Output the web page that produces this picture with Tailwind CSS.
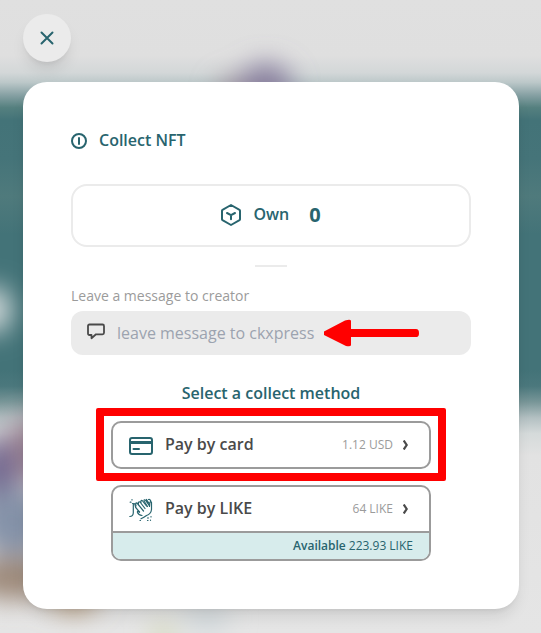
<!DOCTYPE html>
<html lang="en">
<head>
<meta charset="utf-8">
<title>Collect NFT</title>
<script src="https://cdn.jsdelivr.net/npm/@tailwindcss/browser@4"></script>
</head>
<body class="relative h-[633px] w-[541px] overflow-hidden bg-[#e0e0e0] font-['Open_Sans','Noto_Sans',sans-serif] text-[#28646e]">
  <!-- blurred page behind the dialog -->
  <svg class="absolute inset-0" width="541" height="633" viewBox="0 0 541 633" aria-hidden="true">
    <defs>
      <linearGradient id="bg" x1="0" y1="0" x2="0" y2="633" gradientUnits="userSpaceOnUse">
        <stop offset="0" stop-color="#e0e0e0"/><stop offset=".088" stop-color="#dfdfdf"/><stop offset=".115" stop-color="#d3d7d8"/><stop offset=".13" stop-color="#bcc8c9"/><stop offset=".15" stop-color="#87a1a4"/><stop offset=".17" stop-color="#55807f"/><stop offset=".19" stop-color="#437378"/><stop offset=".25" stop-color="#457479"/><stop offset=".31" stop-color="#4f7a7c"/><stop offset=".37" stop-color="#437378"/><stop offset=".585" stop-color="#437378"/><stop offset=".61" stop-color="#4b787d"/><stop offset=".635" stop-color="#789698"/><stop offset=".66" stop-color="#b3c0c2"/><stop offset=".685" stop-color="#d5dada"/><stop offset=".72" stop-color="#e2e2e2"/><stop offset="1" stop-color="#e5e5e5"/>
      </linearGradient>
      <filter id="b" x="-100%" y="-100%" width="300%" height="300%"><feGaussianBlur stdDeviation="13"/></filter>
    </defs>
    <path fill="url(#bg)" d="M0 0h541v633H0z"/>
    <g filter="url(#b)">
      <ellipse cx="236" cy="95" rx="20" ry="18" fill="#a999a3"/>
      <ellipse cx="266" cy="90" rx="27" ry="27" fill="#8a809f"/>
      <ellipse cx="-8" cy="310" rx="20" ry="24" fill="#d4dbdc"/>
      <ellipse cx="28" cy="450" rx="24" ry="32" fill="#9b8393"/>
      <ellipse cx="-3" cy="473" rx="22" ry="35" fill="#746a92"/>
      <ellipse cx="14" cy="522" rx="38" ry="33" fill="#8492a8"/>
      <ellipse cx="14" cy="578" rx="42" ry="22" fill="#9c8878"/>
      <ellipse cx="74" cy="598" rx="24" ry="14" fill="#b79a78"/>
      <ellipse cx="163" cy="636" rx="12" ry="12" fill="#d0d5b0"/>
      <ellipse cx="207" cy="618" rx="24" ry="14" fill="#cfd7da"/>
    </g>
  </svg>

  <div class="relative flex flex-col items-start pl-[23px] pt-[14px]">
    <button class="flex size-12 items-center justify-center rounded-full bg-[#ebebeb] shadow-lg" aria-label="Close">
      <svg width="14" height="14" viewBox="0 0 14 14" fill="none" stroke="#28646e" stroke-width="2" stroke-linecap="round"><path d="M1.5 1.5l11 11M12.5 1.5l-11 11"/></svg>
    </button>

    <main class="mt-5 flex h-[527px] w-[496px] flex-col rounded-3xl bg-white px-12 pt-[46px] shadow-lg">
      <h1 class="flex h-6 items-center gap-3 text-base font-[580]">
        <svg class="overflow-visible" width="16" height="16" viewBox="0 0 16 16" fill="none" stroke="#28646e" stroke-width="2" stroke-linecap="round"><circle cx="8" cy="9" r="7"/><path d="M8 6v6"/></svg>
        <span>Collect NFT</span>
      </h1>

      <section class="mt-8 flex h-[63px] items-center justify-center rounded-2xl border-2 border-[#ebebeb] pb-px pr-px">
        <svg width="22" height="24" viewBox="0 0 22 24" fill="none" stroke="#28646e" stroke-width="2" stroke-linejoin="round" stroke-linecap="round"><path d="M11 2 19.5 6.800Q20 7.100 20 7.700v8.600q0 .6-.5.9L11 22 2.500 17.200Q2 16.900 2 16.300V7.700Q2 7.100 2.500 6.800Z"/><path d="M7 10l4 2.200 4-2.200M11 12.200v4"/></svg>
        <span class="-mt-0.5 ml-[11px] text-base font-[580]">Own</span>
        <span class="ml-5 text-xl font-bold">0</span>
      </section>
      <div class="mt-[18px] h-0.5 w-8 self-center bg-[#ebebeb]"></div>

      <label class="mt-[19px] text-sm text-[#9b9b9b]">Leave a message to creator</label>
      <div class="mt-[5px] flex h-11 items-center rounded-xl bg-[#ebebeb] pl-4">
        <svg class="-mt-1" width="18" height="17" viewBox="0 0 18 17" fill="none" stroke="#4a4a4a" stroke-width="1.800" stroke-linejoin="round"><path d="M2.500 1.500h13q1.500 0 1.500 1.500v6.800q0 1.500-1.500 1.500H9L4.500 15.200V12H2.500Q1 12 1 10.500V3Q1 1.500 2.500 1.500Z"/></svg>
        <span class="ml-3 text-base text-[#9ca3af]">leave message to ckxpress</span>
      </div>

      <h2 class="mt-[26px] text-center text-base font-[580] leading-6">Select a collect method</h2>

      <div class="mt-4 flex w-80 flex-col gap-4 self-center">
        <button class="flex h-12 items-center rounded-[10px] border-2 border-[#9b9b9b] pl-4 pr-[21px]">
          <svg class="mt-0.5" width="24" height="20" viewBox="0 0 24 20" fill="none"><rect x="1" y="2" width="22" height="16" rx="2" stroke="#28646e" stroke-width="2"/><path d="M1 5h22v3H1z" fill="#28646e"/><path d="M4.500 13h5.500" stroke="#28646e" stroke-width="2" stroke-linecap="round"/></svg>
          <span class="-mt-0.5 ml-3 grow text-left text-base font-[580] text-[#4a4a4a]">Pay by card</span>
          <span class="text-xs text-[#9b9b9b]">1.12 USD</span>
          <svg class="ml-2.5" width="5" height="10" viewBox="0 0 5 10" fill="none" stroke="#4a4a4a" stroke-width="2.200"><path d="M.7.500 3.700 5 .7 9.500"/></svg>
        </button>

        <button class="flex h-[76px] flex-col overflow-hidden rounded-[10px] border-2 border-[#9b9b9b]">
          <span class="flex h-11 w-full items-center pl-4 pr-[21px]">
            <svg class="mt-0.5" width="24" height="24" viewBox="0 0 24 24" fill="none" stroke="#28646e" stroke-width="1.200" stroke-linecap="round" stroke-linejoin="round">
              <path d="M.8 18.500Q4 18.500 4.300 15V6.500Q5 4.500 6 6.500L6.700 9.500 10.500 14"/>
              <path d="M7 8Q6 4.500 8 5L14.500 13M9.500 6.500Q9 3 11 4L16 10.500M12 5Q11.500 2 13.200 2.500L17.500 8"/>
              <path d="M12 20.800Q15 19.500 17.500 17.500 22 16 22.500 11.500V4.500Q21.500 2.500 20.800 5L20.500 8.500M22 4Q21.500 1 19.500 1.500M20.500 8 16.500 2.200Q15 1 15 3L18.500 8.500M19.800 5 17.500 1.500M10.500 14Q8 12.500 8.500 14.500 9.500 17 13 17.500"/>
              <path d="M1.200 4.200h.8M3 1.500v.5M3.500 5.500l.8.300M19 19.500v.8M22 18.500v.5M18.500 22.500h.5M21.500 22v.3M11 22.500h.5"/>
            </svg>
            <span class="-mt-0.5 ml-3 grow text-left text-base font-[580] text-[#4a4a4a]">Pay by LIKE</span>
            <span class="text-xs text-[#9b9b9b]">64 LIKE</span>
            <svg class="ml-2.5" width="5" height="10" viewBox="0 0 5 10" fill="none" stroke="#4a4a4a" stroke-width="2.200"><path d="M.7.500 3.700 5 .7 9.500"/></svg>
          </span>
          <span class="flex h-[28px] w-full items-center justify-end gap-[3px] border-t-2 border-[#9b9b9b] bg-[#d7ecec] pr-4 text-xs"><b class="font-semibold">Available</b>223.93 LIKE</span>
        </button>
      </div>
    </main>
  </div>

  <!-- annotations -->
  <div class="absolute left-[96px] top-[408px] h-[73px] w-[350px] rounded-[2px] border-8 border-[#ff0000]"></div>
  <svg class="absolute left-[323px] top-[319px]" width="98" height="29" viewBox="0 0 98 29" fill="#f00" aria-hidden="true"><path d="M1 12.500 22 1.500Q28 0 28 2v8h65q3 0 3 4.200T93 18H28v8q0 2-5 1L1 16Z"/></svg>
</body>
</html>
